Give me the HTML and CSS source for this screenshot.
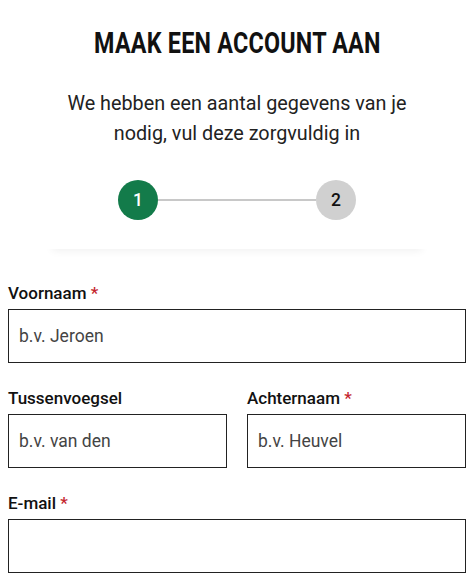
FILE: index.html
```html
<!doctype html>
<html lang="nl">
    <head>
        <meta charset="UTF-8" />
        <meta name="viewport" content="width=device-width, initial-scale=1.0" />
        <title>Maak een account aan</title>
        <link rel="stylesheet" href="styles.css">
    </head>
    <body>
        <div class="container">
            <div class="intro">
                <h1><span>MAAK EEN ACCOUNT AAN</span></h1>
                <p>We hebben een aantal gegevens van je nodig, vul deze zorgvuldig in</p>

                <div class="stepper">
                    <div class="step step-active">1</div>
                    <div class="step-line"></div>
                    <div class="step">2</div>
                </div>
            </div>

            <form class="form">
                <div class="field">
                    <label for="firstname">Voornaam <span class="required">*</span></label>
                    <input id="firstname" type="text" placeholder="b.v. Jeroen">
                </div>

                <div class="field-row">
                    <div class="field">
                        <label for="infix">Tussenvoegsel</label>
                        <input id="infix" type="text" placeholder="b.v. van den">
                    </div>
                    <div class="field">
                        <label for="lastname">Achternaam <span class="required">*</span></label>
                        <input id="lastname" type="text" placeholder="b.v. Heuvel">
                    </div>
                </div>

                <div class="field">
                    <label for="email">E-mail <span class="required">*</span></label>
                    <input id="email" type="email">
                </div>
            </form>
        </div>
    </body>
</html>
```

FILE: styles.css
```css
* {
    margin: 0;
    padding: 0;
    box-sizing: border-box;
}

body {
    font-family: Roboto, "Liberation Sans", sans-serif;
    color: #1a1a1a;
    background: #fff;
}

.container {
    width: 458px;
    margin: 0 8px;
}

.intro {
    text-align: center;
    padding-top: 27px;
    padding-bottom: 29px;
    margin: 0 38px;
    box-shadow: 0 8px 8px -6px rgba(0, 0, 0, 0.06);
}

.intro h1 {
    font-size: 29.5px;
    font-weight: 700;
    line-height: 32px;
    color: #111;
    white-space: nowrap;
}

.intro h1 span {
    display: inline-block;
    transform: scaleX(0.79);
    letter-spacing: 0.3px;
}

.intro p {
    font-size: 19.8px;
    line-height: 30px;
    color: #222;
    max-width: 365px;
    margin: 30px auto 0;
}

.stepper {
    display: flex;
    align-items: center;
    justify-content: center;
    margin-top: 31px;
}

.step {
    width: 40px;
    height: 40px;
    border-radius: 50%;
    background: #d0d0d0;
    color: #111;
    font-size: 17.5px;
    font-weight: 500;
    display: flex;
    align-items: center;
    justify-content: center;
}

.step-active {
    background: #137b4a;
    color: #fff;
}

.step-line {
    width: 158px;
    height: 2px;
    background: #c8c8c8;
}

.form {
    padding-top: 34px;
}

.field {
    display: flex;
    flex-direction: column;
    margin-bottom: 25px;
    min-width: 0;
}

.field label {
    font-size: 17px;
    font-weight: 500;
    line-height: 20px;
    color: #111;
    margin-bottom: 6px;
}

.required {
    color: #c4262e;
}

.field input {
    width: 100%;
    height: 54px;
    border: 1px solid #222;
    border-radius: 0;
    padding: 0 10px;
    font-family: Roboto, "Liberation Sans", sans-serif;
    font-size: 17.5px;
    color: #222;
    background: #fff;
    outline: none;
}

.field input::placeholder {
    color: #444;
}

.field-row {
    display: grid;
    grid-template-columns: minmax(0, 1fr) minmax(0, 1fr);
    gap: 20px;
}
```
